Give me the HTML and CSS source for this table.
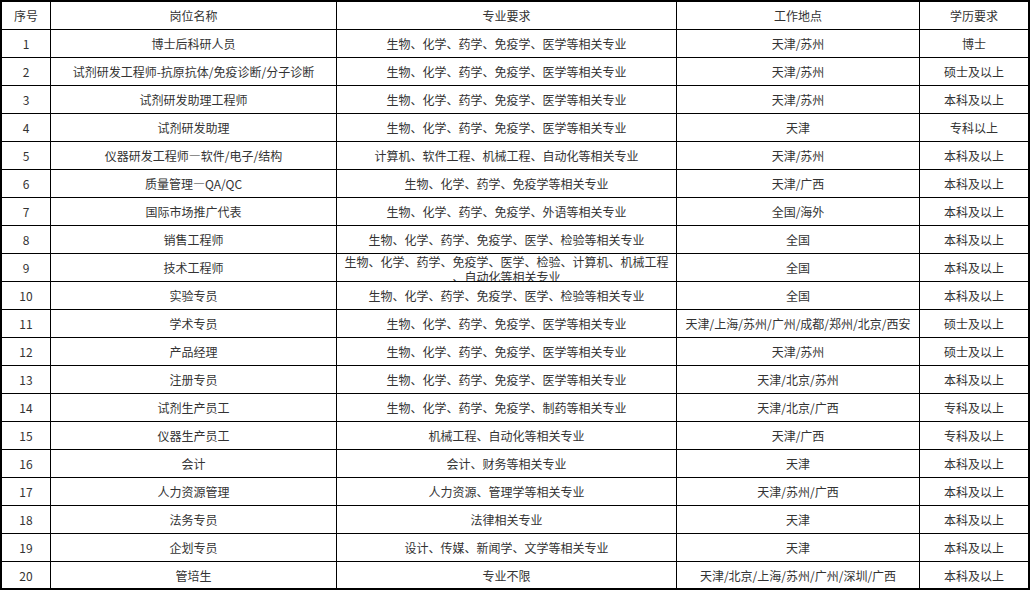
FILE: index.html
```html
<!DOCTYPE html>
<html lang="zh-CN">
<head>
<meta charset="utf-8">
<title>招聘岗位</title>
<link rel="stylesheet" href="styles.css">
</head>
<body>
<div class="jobs">
  <div class="cell">序号</div><div class="cell">岗位名称</div><div class="cell">专业要求</div><div class="cell">工作地点</div><div class="cell">学历要求</div>
  <div class="cell">1</div><div class="cell">博士后科研人员</div><div class="cell">生物、化学、药学、免疫学、医学等相关专业</div><div class="cell">天津/苏州</div><div class="cell">博士</div>
  <div class="cell">2</div><div class="cell">试剂研发工程师-抗原抗体/免疫诊断/分子诊断</div><div class="cell">生物、化学、药学、免疫学、医学等相关专业</div><div class="cell">天津/苏州</div><div class="cell">硕士及以上</div>
  <div class="cell">3</div><div class="cell">试剂研发助理工程师</div><div class="cell">生物、化学、药学、免疫学、医学等相关专业</div><div class="cell">天津/苏州</div><div class="cell">本科及以上</div>
  <div class="cell">4</div><div class="cell">试剂研发助理</div><div class="cell">生物、化学、药学、免疫学、医学等相关专业</div><div class="cell">天津</div><div class="cell">专科以上</div>
  <div class="cell">5</div><div class="cell">仪器研发工程师—软件/电子/结构</div><div class="cell">计算机、软件工程、机械工程、自动化等相关专业</div><div class="cell">天津/苏州</div><div class="cell">本科及以上</div>
  <div class="cell">6</div><div class="cell">质量管理—QA/QC</div><div class="cell">生物、化学、药学、免疫学等相关专业</div><div class="cell">天津/广西</div><div class="cell">本科及以上</div>
  <div class="cell">7</div><div class="cell">国际市场推广代表</div><div class="cell">生物、化学、药学、免疫学、外语等相关专业</div><div class="cell">全国/海外</div><div class="cell">本科及以上</div>
  <div class="cell">8</div><div class="cell">销售工程师</div><div class="cell">生物、化学、药学、免疫学、医学、检验等相关专业</div><div class="cell">全国</div><div class="cell">本科及以上</div>
  <div class="cell">9</div><div class="cell">技术工程师</div><div class="cell wrap"><span>生物、化学、药学、免疫学、医学、检验、计算机、机械工程、自动化等相关专业</span></div><div class="cell">全国</div><div class="cell">本科及以上</div>
  <div class="cell">10</div><div class="cell">实验专员</div><div class="cell">生物、化学、药学、免疫学、医学、检验等相关专业</div><div class="cell">全国</div><div class="cell">本科及以上</div>
  <div class="cell">11</div><div class="cell">学术专员</div><div class="cell">生物、化学、药学、免疫学、医学等相关专业</div><div class="cell">天津/上海/苏州/广州/成都/郑州/北京/西安</div><div class="cell">硕士及以上</div>
  <div class="cell">12</div><div class="cell">产品经理</div><div class="cell">生物、化学、药学、免疫学、医学等相关专业</div><div class="cell">天津/苏州</div><div class="cell">硕士及以上</div>
  <div class="cell">13</div><div class="cell">注册专员</div><div class="cell">生物、化学、药学、免疫学、医学等相关专业</div><div class="cell">天津/北京/苏州</div><div class="cell">本科及以上</div>
  <div class="cell">14</div><div class="cell">试剂生产员工</div><div class="cell">生物、化学、药学、免疫学、制药等相关专业</div><div class="cell">天津/北京/广西</div><div class="cell">专科及以上</div>
  <div class="cell">15</div><div class="cell">仪器生产员工</div><div class="cell">机械工程、自动化等相关专业</div><div class="cell">天津/广西</div><div class="cell">专科及以上</div>
  <div class="cell">16</div><div class="cell">会计</div><div class="cell">会计、财务等相关专业</div><div class="cell">天津</div><div class="cell">本科及以上</div>
  <div class="cell">17</div><div class="cell">人力资源管理</div><div class="cell">人力资源、管理学等相关专业</div><div class="cell">天津/苏州/广西</div><div class="cell">本科及以上</div>
  <div class="cell">18</div><div class="cell">法务专员</div><div class="cell">法律相关专业</div><div class="cell">天津</div><div class="cell">本科及以上</div>
  <div class="cell">19</div><div class="cell">企划专员</div><div class="cell">设计、传媒、新闻学、文学等相关专业</div><div class="cell">天津</div><div class="cell">本科及以上</div>
  <div class="cell">20</div><div class="cell">管培生</div><div class="cell">专业不限</div><div class="cell">天津/北京/上海/苏州/广州/深圳/广西</div><div class="cell">本科及以上</div>
</div>
</body>
</html>
```

FILE: styles.css
```css
html, body {
  margin: 0;
  padding: 0;
  background: #fff;
}

.jobs {
  width: 1030px;
  height: 590px;
  box-sizing: border-box;
  padding: 2px;
  background: #000;
  display: grid;
  grid-template-columns: 48px 285px 339px 242px 108px;
  grid-template-rows: repeat(20, 27px) 26px;
  gap: 1px;
  font-family: "Noto Sans CJK SC", "Microsoft YaHei", sans-serif;
  font-size: 12px;
  color: #333;
  overflow: hidden;
}

.cell {
  background: #fff;
  display: flex;
  align-items: center;
  justify-content: center;
  text-align: center;
  line-height: 15px;
  white-space: nowrap;
  overflow: hidden;
}

.cell.wrap {
  white-space: normal;
  align-items: flex-start;
  padding: 0 6px;
  line-break: anywhere;
  word-break: break-all;
}

.cell.wrap span {
  display: block;
}
```
